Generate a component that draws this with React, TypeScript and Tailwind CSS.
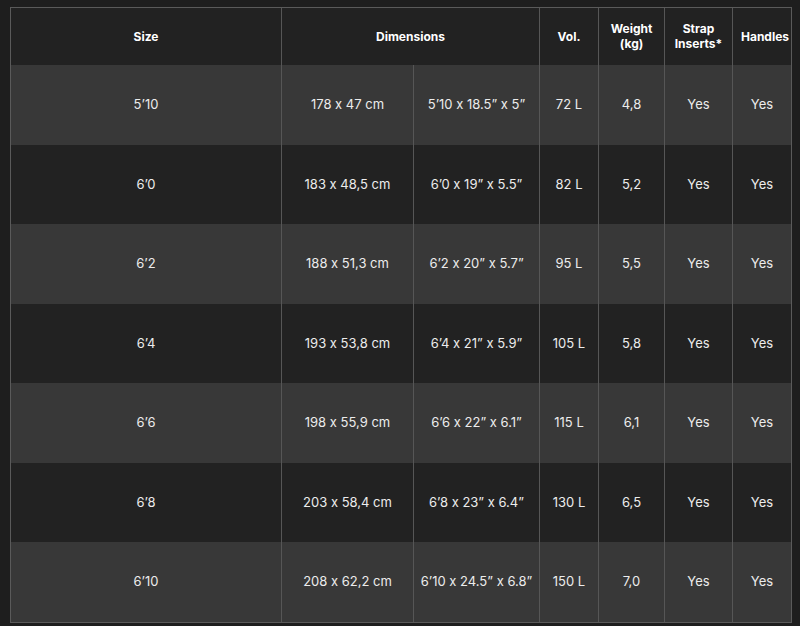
import React from 'react';

interface BoardRow {
  size: string;
  metric: string;
  imperial: string;
  volume: string;
  weight: string;
  straps: string;
  handles: string;
}

const rows: BoardRow[] = [
  { size: '5’10', metric: '178 x 47 cm', imperial: '5’10 x 18.5” x 5”', volume: '72 L', weight: '4,8', straps: 'Yes', handles: 'Yes' },
  { size: '6’0', metric: '183 x 48,5 cm', imperial: '6’0 x 19” x 5.5”', volume: '82 L', weight: '5,2', straps: 'Yes', handles: 'Yes' },
  { size: '6’2', metric: '188 x 51,3 cm', imperial: '6’2 x 20” x 5.7”', volume: '95 L', weight: '5,5', straps: 'Yes', handles: 'Yes' },
  { size: '6’4', metric: '193 x 53,8 cm', imperial: '6’4 x 21” x 5.9”', volume: '105 L', weight: '5,8', straps: 'Yes', handles: 'Yes' },
  { size: '6’6', metric: '198 x 55,9 cm', imperial: '6’6 x 22” x 6.1”', volume: '115 L', weight: '6,1', straps: 'Yes', handles: 'Yes' },
  { size: '6’8', metric: '203 x 58,4 cm', imperial: '6’8 x 23” x 6.4”', volume: '130 L', weight: '6,5', straps: 'Yes', handles: 'Yes' },
  { size: '6’10', metric: '208 x 62,2 cm', imperial: '6’10 x 24.5” x 6.8”', volume: '150 L', weight: '7,0', straps: 'Yes', handles: 'Yes' },
];

const grid = 'grid grid-cols-[270px_132px_126px_59px_66px_68px_59px]';

const HeadCell: React.FC<{ children: React.ReactNode; className?: string }> = ({ children, className = '' }) => (
  <div
    className={`flex flex-col items-center justify-center text-center text-[12px] font-bold leading-[15px] text-white ${className}`}
  >
    {children}
  </div>
);

const Cell: React.FC<{ children: React.ReactNode; first?: boolean }> = ({ children, first }) => (
  <div
    className={`flex items-center justify-center text-[13px] text-[#ececec] whitespace-nowrap ${
      first ? '' : 'border-l border-[#565656]'
    }`}
  >
    {children}
  </div>
);

export default function App() {
  return (
    <div
      className="w-[800px] h-[626px] bg-[#1e1e1e] pt-[7px] pl-[10px] overflow-hidden [font-feature-settings:'calt'_0]"
      style={{ fontFamily: 'Inter, "Noto Sans", sans-serif' }}
    >
      <div className="w-[782px] border border-[#5a5a5a]">
        <div className={`${grid} h-[57px] bg-[#222222]`}>
          <HeadCell>Size</HeadCell>
          <HeadCell className="col-span-2 border-l border-[#565656]">Dimensions</HeadCell>
          <HeadCell className="border-l border-[#565656]">Vol.</HeadCell>
          <HeadCell className="border-l border-[#565656] pb-[2px]">
            <span>Weight</span>
            <span>(kg)</span>
          </HeadCell>
          <HeadCell className="border-l border-[#565656] pb-[2px]">
            <span>Strap</span>
            <span>Inserts*</span>
          </HeadCell>
          <HeadCell className="border-l border-[#565656] whitespace-nowrap pl-[6px]">Handles</HeadCell>
        </div>
        {rows.map((row, i) => (
          <div
            key={row.size}
            className={`${grid} h-[79.5px] ${i % 2 === 0 ? 'bg-[#383838]' : 'bg-[#222222]'}`}
          >
            <Cell first>{row.size}</Cell>
            <Cell>{row.metric}</Cell>
            <Cell>{row.imperial}</Cell>
            <Cell>{row.volume}</Cell>
            <Cell>{row.weight}</Cell>
            <Cell>{row.straps}</Cell>
            <Cell>{row.handles}</Cell>
          </div>
        ))}
      </div>
    </div>
  );
}
